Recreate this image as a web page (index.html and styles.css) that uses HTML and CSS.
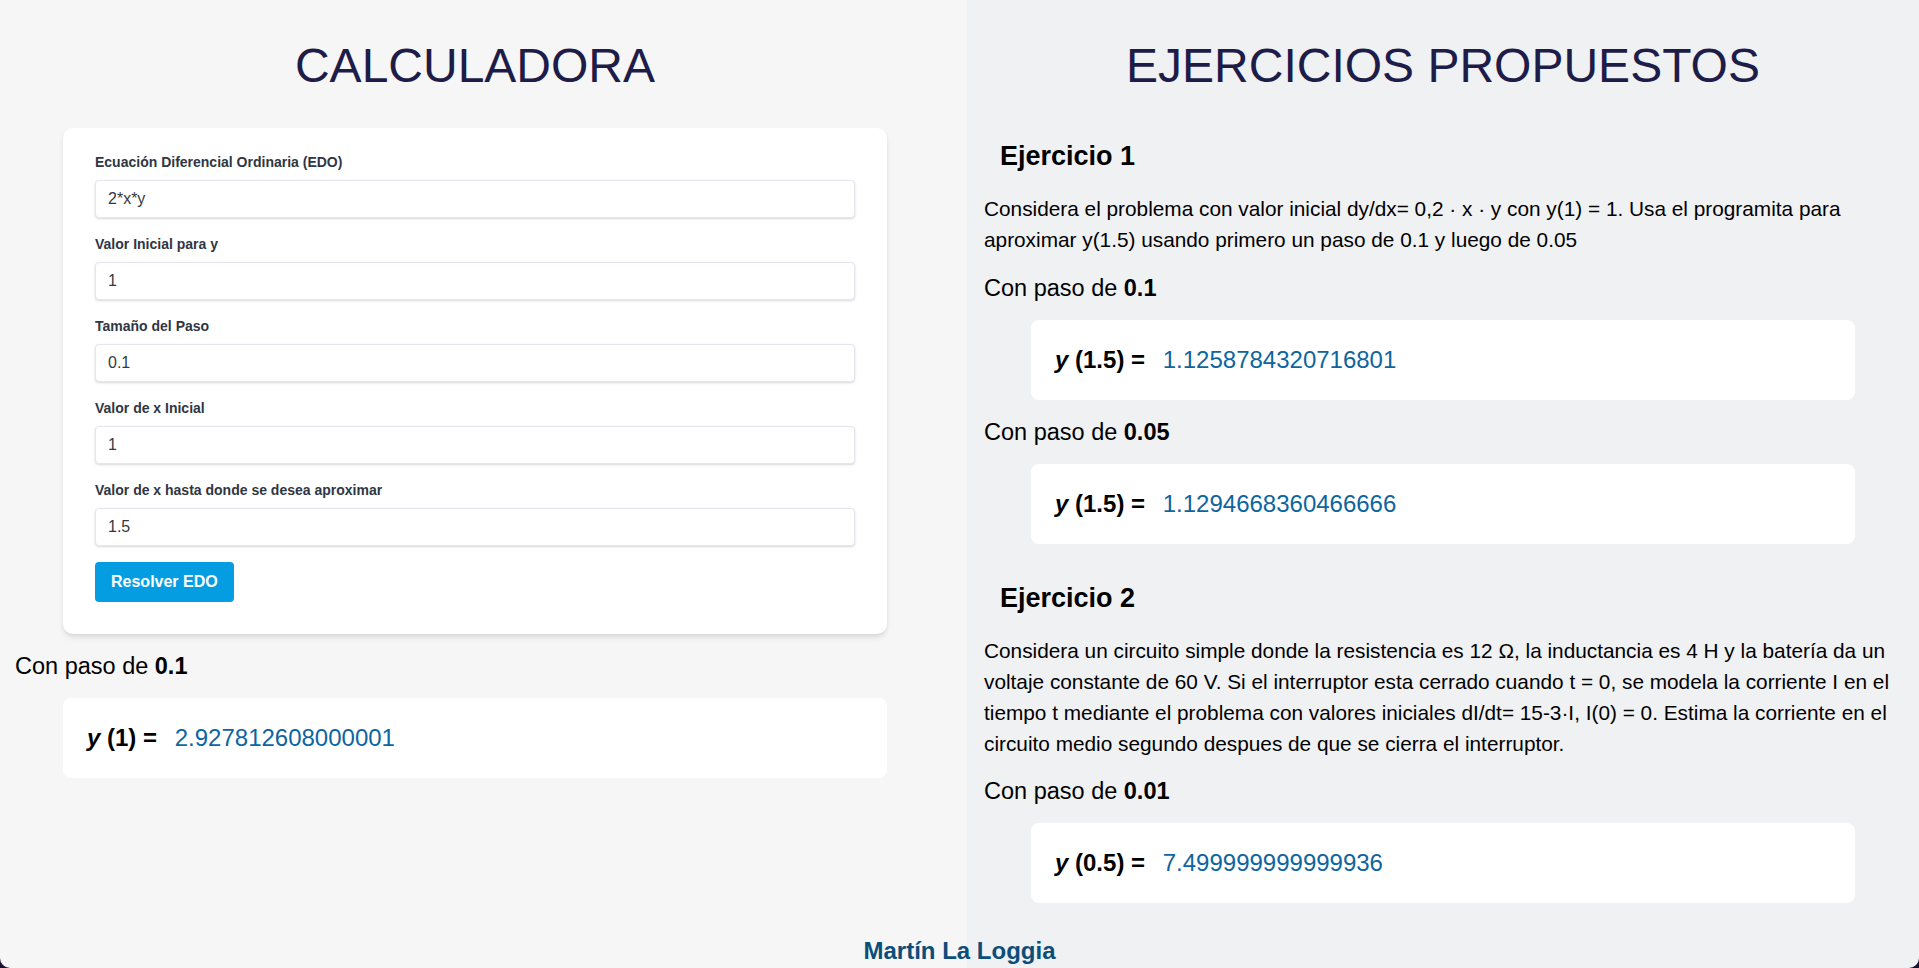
FILE: index.html
```html
<!DOCTYPE html>
<html lang="es">
<head>
<meta charset="utf-8">
<title>Calculadora EDO</title>
<link rel="stylesheet" href="styles.css">
</head>
<body>
<div class="page">
  <section class="col col-left">
    <h1 class="title">CALCULADORA</h1>
    <form class="card">
      <div class="field">
        <label class="label">Ecuación Diferencial Ordinaria (EDO)</label>
        <input class="input" type="text" value="2*x*y">
      </div>
      <div class="field">
        <label class="label">Valor Inicial para y</label>
        <input class="input" type="text" value="1">
      </div>
      <div class="field">
        <label class="label">Tamaño del Paso</label>
        <input class="input" type="text" value="0.1">
      </div>
      <div class="field">
        <label class="label">Valor de x Inicial</label>
        <input class="input" type="text" value="1">
      </div>
      <div class="field">
        <label class="label">Valor de x hasta donde se desea aproximar</label>
        <input class="input" type="text" value="1.5">
      </div>
      <button class="btn" type="button">Resolver EDO</button>
    </form>
    <p class="step">Con paso de <b>0.1</b></p>
    <div class="result"><span class="res-label"><i>y</i> (1) = </span><span class="res-value">2.927812608000001</span></div>
  </section>

  <section class="col col-right">
    <h1 class="title">EJERCICIOS PROPUESTOS</h1>

    <h2 class="ex-title ex-first">Ejercicio 1</h2>
    <p class="ex-text">Considera el problema con valor inicial dy/dx= 0,2 · x · y con y(1) = 1. Usa el programita para aproximar y(1.5) usando primero un paso de 0.1 y luego de 0.05</p>
    <p class="step">Con paso de <b>0.1</b></p>
    <div class="result"><span class="res-label"><i>y</i> (1.5) = </span><span class="res-value">1.1258784320716801</span></div>
    <p class="step">Con paso de <b>0.05</b></p>
    <div class="result"><span class="res-label"><i>y</i> (1.5) = </span><span class="res-value">1.1294668360466666</span></div>

    <h2 class="ex-title">Ejercicio 2</h2>
    <p class="ex-text">Considera un circuito simple donde la resistencia es 12 Ω, la inductancia es 4 H y la batería da un voltaje constante de 60 V. Si el interruptor esta cerrado cuando t = 0, se modela la corriente I en el tiempo t mediante el problema con valores iniciales dI/dt= 15-3·I, I(0) = 0. Estima la corriente en el circuito medio segundo despues de que se cierra el interruptor.</p>
    <p class="step">Con paso de <b>0.01</b></p>
    <div class="result"><span class="res-label"><i>y</i> (0.5) = </span><span class="res-value">7.499999999999936</span></div>
  </section>

  <footer class="footer">Martín La Loggia</footer>
</div>
</body>
</html>
```

FILE: styles.css
```css
html {
  background: #1b1230;
}

body {
  margin: 0;
  font-family: "Liberation Sans", Arial, Helvetica, sans-serif;
  color: #000;
}

.page {
  position: relative;
  display: flex;
  height: 968px;
  overflow: hidden;
  border-radius: 0 0 10px 10px;
}

.col {
  box-sizing: border-box;
  height: 100%;
}

.col-left {
  width: 967px;
  flex: none;
  background: #f6f6f6;
  padding: 0 32px 0 15px;
}

.col-right {
  flex: 1;
  background: #f0f1f3;
  padding: 0 17px;
}

.title {
  margin: 38px 0 0;
  font-size: 48px;
  line-height: 55px;
  font-weight: 400;
  text-align: center;
  color: #1e1c48;
}

/* form card */
.card {
  margin: 35px 48px 0;
  padding: 24px 32px 32px;
  background: #fff;
  border-radius: 10px;
  box-shadow: 0 4px 6px -1px rgba(0, 0, 0, 0.1), 0 2px 4px -1px rgba(0, 0, 0, 0.06);
}

.field {
  margin-bottom: 16px;
}

.label {
  display: block;
  margin-bottom: 8px;
  font-size: 14px;
  line-height: 20px;
  font-weight: 700;
  color: #2f3644;
}

.input {
  display: block;
  box-sizing: border-box;
  width: 100%;
  margin: 0;
  padding: 8px 12px;
  border: 1px solid #e3e6ec;
  border-radius: 4px;
  font-family: inherit;
  font-size: 16px;
  line-height: 20px;
  color: #333a45;
  background: #fff;
  box-shadow: 0 1px 3px 0 rgba(0, 0, 0, 0.1), 0 1px 2px 0 rgba(0, 0, 0, 0.06);
  outline: none;
}

.btn {
  display: block;
  margin: 0;
  padding: 8px 16px;
  border: 0;
  border-radius: 4px;
  background: #059de2;
  color: #fff;
  font-family: inherit;
  font-size: 16px;
  line-height: 24px;
  font-weight: 700;
}

/* results */
.step {
  margin: 19px 0;
  font-size: 23.5px;
  line-height: 26px;
}

.col-right .step {
  margin: 19.5px 0 19px;
}

.step b {
  font-weight: 700;
}

.result {
  margin: 0 48px;
  padding: 24px;
  background: #fff;
  border-radius: 8px;
  font-size: 24px;
  line-height: 32px;
}

.col-right .result {
  margin: 0 47px;
}

.res-label {
  font-weight: 700;
}

.res-value {
  margin-left: 11px;
  color: #0d65a0;
}

/* exercises */
.ex-title {
  margin: 38.5px 0 0;
  padding-left: 16px;
  font-size: 27px;
  line-height: 30px;
  font-weight: 700;
}

.ex-first {
  margin-top: 48px;
}

.ex-text {
  margin: 22px 0 0;
  font-size: 20.8px;
  line-height: 31px;
}

.footer {
  position: absolute;
  left: 0;
  right: 0;
  bottom: 3px;
  text-align: center;
  font-size: 24px;
  line-height: 28px;
  font-weight: 700;
  color: #0c4e7a;
}
```
